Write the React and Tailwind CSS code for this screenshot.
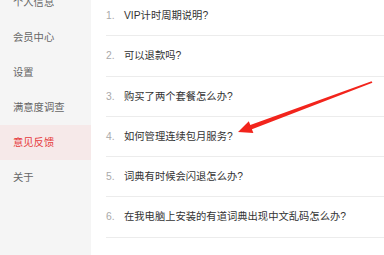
import React from "react";

const menu = ["个人信息", "会员中心", "设置", "满意度调查", "意见反馈", "关于"];
const items = [
  "VIP计时周期说明?",
  "可以退款吗?",
  "购买了两个套餐怎么办?",
  "如何管理连续包月服务?",
  "词典有时候会闪退怎么办?",
  "在我电脑上安装的有道词典出现中文乱码怎么办?",
];

export default function App() {
  return (
    <div
      className="relative w-[384px] h-[255px] overflow-hidden bg-white flex"
      style={{ fontFamily: '"Liberation Sans", "Noto Sans CJK SC", sans-serif' }}
    >
      <div className="w-[91px] shrink-0 bg-[#f5f5f5] h-full">
        <div className="mt-[-15px] flex flex-col">
          {menu.map((m) => {
            const active = m === "意见反馈";
            return (
              <div
                key={m}
                className={
                  "h-[35px] flex items-center pl-[13px] text-[10.3px] " +
                  (active ? "bg-[#f6e9e9] text-[#e6393c]" : "text-[#666]")
                }
              >
                {m}
              </div>
            );
          })}
        </div>
      </div>
      <div className="flex-1 pl-[15px]">
        <div className="mt-[-4px] flex flex-col">
          {items.map((t, i) => (
            <div
              key={i}
              className="h-[40.3px] flex items-center border-b border-[#ececec] text-[10.3px]"
            >
              <span className="w-[18px] text-[#aaa]">{i + 1}.</span>
              <span className="text-[#333]">{t}</span>
            </div>
          ))}
        </div>
      </div>
      <svg
        className="absolute left-0 top-0 pointer-events-none"
        width="384"
        height="255"
        viewBox="0 0 384 255"
      >
        <polygon
          fill="#f2241c"
          points="238,132 253.4,133 251.9,129.2 372.4,82.8 371.6,81.2 250.3,125 248.8,121.2"
        />
      </svg>
    </div>
  );
}
